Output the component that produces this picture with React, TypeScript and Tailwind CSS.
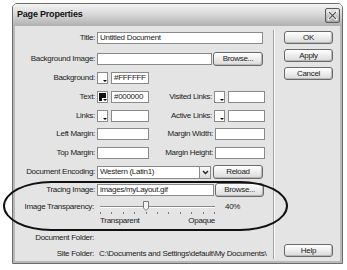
import React from "react";

const font = { fontFamily: '"Liberation Sans", Arial, sans-serif' };

function Input({ w, text }: { w: string; text?: string }) {
  return (
    <div className={`${w} h-[12px] bg-white border border-[#8a8a8a] flex items-center px-[2px] text-[8px] text-[#222] leading-none whitespace-nowrap overflow-hidden`}>
      {text}
    </div>
  );
}

function Btn({ w, label, h = "h-[14px]" }: { w: string; label: string; h?: string }) {
  return (
    <div className={`${w} ${h} rounded-[3px] border border-[#6a6a6a] bg-gradient-to-b from-[#ffffff] to-[#dadada] flex items-center justify-center text-[8px] text-[#222] leading-none shadow-[inset_-1px_-1px_0_#b8b8b8]`}>
      {label}
    </div>
  );
}

function Swatch({ dark }: { dark?: boolean }) {
  return (
    <div className="relative w-[11px] h-[12px] border border-[#8a8a8a] bg-white p-[1px]">
      <div className={`w-full h-full ${dark ? "bg-[#111]" : "bg-white"}`} />
      <div className="absolute right-0 bottom-0 w-[5px] h-[4px] bg-white flex items-end justify-center">
        <div className="w-0 h-0 border-l-[2px] border-r-[2px] border-t-[2px] border-l-transparent border-r-transparent border-t-black mb-[1px]" />
      </div>
    </div>
  );
}

function Label({ w = "w-[82px]", children, pr = "pr-[2px]" }: { w?: string; children: React.ReactNode; pr?: string }) {
  return <div className={`${w} ${pr} text-right shrink-0 whitespace-nowrap`}>{children}</div>;
}

export default function App() {
  const ticks = Array.from({ length: 11 }, (_, i) => i);
  return (
    <div className="relative w-[347px] h-[270px] bg-white overflow-hidden pl-[12px] pt-[3px] tracking-[-0.3px] text-[#222]" style={font}>
      <div className="w-[331px] h-[261px] border border-[#6d6d6d] rounded-t-[5px] flex flex-col bg-[#e4e4e4] overflow-hidden">
        {/* title bar */}
        <div className="h-[22px] shrink-0 bg-gradient-to-b from-[#f4f4f4] via-[#d6d6d6] to-[#b0b0b0] flex items-center justify-between pl-[4px] pr-[2px]">
          <span className="text-[9px] font-bold text-[#111] tracking-[-0.2px]">Page Properties</span>
          <div className="w-[15px] h-[15px] border border-[#5a5a5a] rounded-[2px] bg-gradient-to-b from-[#e8e8e8] to-[#a8a8a8] flex items-center justify-center">
            <svg width="11" height="11" viewBox="0 0 11 11">
              <path d="M2 2 L9 9 M9 2 L2 9" stroke="#fff" strokeWidth="2.6" strokeLinecap="square" />
              <path d="M2 2 L9 9 M9 2 L2 9" stroke="#555" strokeWidth="1.2" />
            </svg>
          </div>
        </div>
        {/* body */}
        <div className="flex-1 flex border-l-[2px] border-r-[2px] border-b-[2px] border-[#b8b8b8] text-[8px] leading-none">
          {/* left column */}
          <div className="w-[258px] flex flex-col">
            {/* Title */}
            <div className="mt-[5px] h-[14px] flex items-center">
              <Label>Title:</Label>
              <Input w="w-[166px]" text="Untitled Document" />
            </div>
            {/* Background Image */}
            <div className="mt-[7px] h-[14px] flex items-center">
              <Label>Background Image:</Label>
              <Input w="w-[115px]" />
              <div className="ml-[1px]">
                <Btn w="w-[50px]" label="Browse..." />
              </div>
            </div>
            {/* Background */}
            <div className="mt-[5px] h-[14px] flex items-center">
              <Label>Background:</Label>
              <Swatch />
              <div className="ml-[3px]">
                <Input w="w-[38px]" text="#FFFFFF" />
              </div>
            </div>
            {/* Text / Visited links */}
            <div className="mt-[5px] h-[14px] flex items-center">
              <Label>Text:</Label>
              <Swatch dark />
              <div className="ml-[3px]">
                <Input w="w-[38px]" text="#000000" />
              </div>
              <Label w="w-[65px]">Visited Links:</Label>
              <Swatch />
              <div className="ml-[3px]">
                <Input w="w-[37px]" />
              </div>
            </div>
            {/* Links / Active links */}
            <div className="mt-[5px] h-[14px] flex items-center">
              <Label>Links:</Label>
              <Swatch />
              <div className="ml-[3px]">
                <Input w="w-[38px]" />
              </div>
              <Label w="w-[65px]">Active Links:</Label>
              <Swatch />
              <div className="ml-[3px]">
                <Input w="w-[37px]" />
              </div>
            </div>
            {/* Left margin */}
            <div className="mt-[4px] h-[14px] flex items-center">
              <Label>Left Margin:</Label>
              <Input w="w-[52px]" />
              <Label w="w-[66px]">Margin Width:</Label>
              <Input w="w-[50px]" />
            </div>
            {/* Top margin */}
            <div className="mt-[5px] h-[14px] flex items-center">
              <Label>Top Margin:</Label>
              <Input w="w-[52px]" />
              <Label w="w-[66px]">Margin Height:</Label>
              <Input w="w-[50px]" />
            </div>
            {/* Document Encoding */}
            <div className="mt-[5px] h-[14px] flex items-center">
              <Label>Document Encoding:</Label>
              <div className="w-[114px] h-[13px] bg-white border border-[#8a8a8a] flex items-center">
                <span className="flex-1 px-[2px]">Western (Latin1)</span>
                <div className="w-[11px] h-full border-l border-[#8a8a8a] bg-gradient-to-b from-[#fafafa] to-[#dcdcdc] flex items-center justify-center">
                  <svg width="7" height="5" viewBox="0 0 7 5">
                    <path d="M1 1 L3.5 3.5 L6 1" stroke="#222" strokeWidth="1.4" fill="none" />
                  </svg>
                </div>
              </div>
              <div className="ml-[2px]">
                <Btn w="w-[50px]" label="Reload" />
              </div>
            </div>
            {/* Tracing image */}
            <div className="mt-[4px] h-[14px] flex items-center">
              <Label>Tracing Image:</Label>
              <Input w="w-[117px]" text="images/myLayout.gif" />
              <div className="ml-[1px]">
                <Btn w="w-[49px]" label="Browse..." />
              </div>
            </div>
            {/* slider */}
            <div className="mt-[3px] h-[14px] flex items-center">
              <Label w="w-[80px]" pr="pr-[1px]">Image Transparency:</Label>
              <div className="relative ml-[5px] w-[115px] h-[14px]">
                <div className="absolute left-0 right-0 top-[6px] h-[2px] border-t border-[#8a8a8a] border-b border-b-white" />
                <div className="absolute left-[43px] top-[1px] w-[6px] h-[10px]">
                  <svg width="6" height="10" viewBox="0 0 6 10">
                    <path d="M0.5 0.5 H5.5 V7 L3 9.5 L0.5 7 Z" fill="#f4f4f4" stroke="#777" strokeWidth="1" />
                  </svg>
                </div>
                <div className="absolute left-0 right-0 top-[12px] flex justify-between">
                  {ticks.map((t) => (
                    <div key={t} className="w-[1px] h-[2px] bg-[#777]" />
                  ))}
                </div>
              </div>
              <span className="ml-[10px]">40%</span>
            </div>
            {/* labels */}
            <div className="h-[14px] flex items-center">
              <div className="w-[85px]" />
              <div className="w-[115px] flex justify-between">
                <span>Transparent</span>
                <span>Opaque</span>
              </div>
            </div>
            {/* document folder */}
            <div className="mt-[3px] h-[14px] flex items-center">
              <Label w="w-[80px]" pr="pr-[1px]">Document Folder:</Label>
            </div>
            <div className="mt-[2px] h-[14px] flex items-center">
              <Label w="w-[80px]" pr="pr-[1px]">Site Folder:</Label>
              <span className="ml-[4px] whitespace-nowrap">C:\Documents and Settings\default\My Documents\</span>
            </div>
          </div>
          {/* separator */}
          <div className="mt-[4px] mb-[2px] w-[2px] border-l border-[#a0a0a0] border-r border-r-white" />
          {/* right column */}
          <div className="flex-1 flex flex-col pl-[9px]">
            <div className="mt-[5px]">
              <Btn w="w-[49px]" h="h-[13px]" label="OK" />
            </div>
            <div className="mt-[5px]">
              <Btn w="w-[49px]" h="h-[13px]" label="Apply" />
            </div>
            <div className="mt-[5px]">
              <Btn w="w-[49px]" h="h-[13px]" label="Cancel" />
            </div>
            <div className="mt-auto mb-[4px]">
              <Btn w="w-[49px]" h="h-[13px]" label="Help" />
            </div>
          </div>
        </div>
      </div>
      {/* hand drawn highlight */}
      <div className="absolute left-[3px] top-[181px] w-[285px] h-[50px] border-[2px] border-[#111] rounded-[48px/25px] pointer-events-none" />
    </div>
  );
}
